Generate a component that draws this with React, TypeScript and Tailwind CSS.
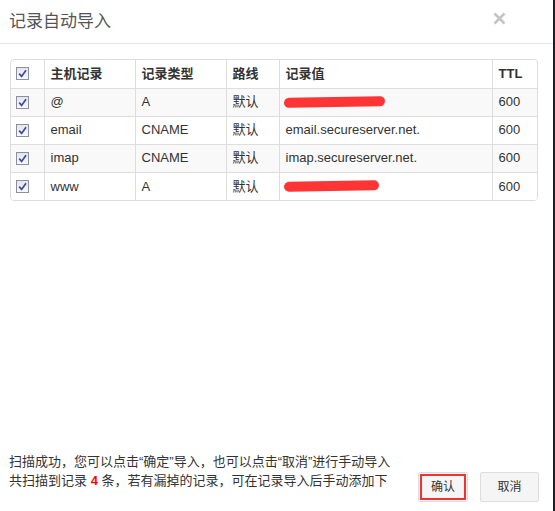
import React from 'react';

const rows = [
  { host: '@', type: 'A', line: '默认', value: null, ttl: '600', scribble: 'w-[101px]' },
  { host: 'email', type: 'CNAME', line: '默认', value: 'email.secureserver.net.', ttl: '600' },
  { host: 'imap', type: 'CNAME', line: '默认', value: 'imap.secureserver.net.', ttl: '600' },
  { host: 'www', type: 'A', line: '默认', value: null, ttl: '600', scribble: 'w-[95px]' },
];

function Check() {
  return (
    <span className="flex h-[13px] w-[13px] items-center justify-center border border-[#8c8f9f] bg-gradient-to-b from-[#e4e6ee] to-[#f7f8fb]">
      <svg width="9" height="9" viewBox="0 0 9 9">
        <path d="M1.2 4.6 L3.6 7.4 L8 1.2" fill="none" stroke="#3b4c9c" strokeWidth="1.7" />
      </svg>
    </span>
  );
}

function Scribble({ w }: { w: string }) {
  return <span className={`block h-[10px] ${w} rounded-full bg-[#ff3535] -rotate-1`} />;
}

export default function App() {
  return (
    <div
      className="relative flex h-[511px] w-[555px] flex-col bg-white text-[#333]"
      style={{ fontFamily: '"Liberation Sans", "Noto Sans CJK SC", sans-serif' }}
    >
      {/* header */}
      <div className="flex h-[44px] items-center justify-between border-b border-[#e5e5e5] pl-[9px] pr-[49px]">
        <h1 className="text-[17px] leading-none text-[#555]">记录自动导入</h1>
        <svg width="13" height="13" viewBox="0 0 13 13" className="-mt-[7px]">
          <path d="M1.5 1.5 L11.5 11.5 M11.5 1.5 L1.5 11.5" stroke="#c4c4c4" strokeWidth="2.6" />
        </svg>
      </div>

      {/* table */}
      <div className="flex-1 px-[10px] pt-[15px]">
        <div className="w-[528px] overflow-hidden rounded-[4px] border border-[#ddd]">
          <table className="w-full border-collapse text-[13px]">
            <colgroup>
              <col className="w-[33px]" />
              <col className="w-[91px]" />
              <col className="w-[91px]" />
              <col className="w-[53px]" />
              <col className="w-[213px]" />
              <col />
            </colgroup>
            <thead>
              <tr className="h-[28px] text-left font-bold">
                <th className="px-[5px]"><Check /></th>
                <th className="border-l border-[#ddd] px-[6px]">主机记录</th>
                <th className="border-l border-[#ddd] px-[6px]">记录类型</th>
                <th className="border-l border-[#ddd] px-[6px]">路线</th>
                <th className="border-l border-[#ddd] px-[6px]">记录值</th>
                <th className="border-l border-[#ddd] px-[6px]">TTL</th>
              </tr>
            </thead>
            <tbody>
              {rows.map((r, i) => (
                <tr key={r.host} className={`h-[28px] border-t border-[#ddd] ${i % 2 === 0 ? 'bg-[#f9f9f9]' : 'bg-white'}`}>
                  <td className="px-[5px]"><Check /></td>
                  <td className="border-l border-[#ddd] px-[6px]">{r.host}</td>
                  <td className="border-l border-[#ddd] px-[6px]">{r.type}</td>
                  <td className="border-l border-[#ddd] px-[6px]">{r.line}</td>
                  <td className="border-l border-[#ddd] px-[4px]">
                    {r.value ? <span className="px-[2px]">{r.value}</span> : <Scribble w={r.scribble!} />}
                  </td>
                  <td className="border-l border-[#ddd] px-[6px]">{r.ttl}</td>
                </tr>
              ))}
            </tbody>
          </table>
        </div>
      </div>

      {/* footer */}
      <div className="flex items-end justify-between pb-[9px] pl-[9px] pr-[16px]">
        <div className="pb-[12px] text-[13px] leading-[19px] text-[#333]">
          <p>扫描成功，您可以点击“确定”导入，也可以点击“取消”进行手动导入</p>
          <p>
            共扫描到记录 <span className="font-bold text-[#f00]">4</span> 条，若有漏掉的记录，可在记录导入后手动添加下
          </p>
        </div>
        <div className="flex shrink-0 gap-[12px]">
          <button className="h-[30px] w-[50px] rounded-[2px] border border-[#ddd] bg-[#f5f5f5] p-[1px] text-[12px] text-[#333]">
            <span className="flex h-full w-full items-center justify-center border-2 border-[#ee3333]">确认</span>
          </button>
          <button className="h-[30px] w-[59px] rounded-[2px] border border-[#ddd] bg-[#f5f5f5] text-[12px] text-[#333]">取消</button>
        </div>
      </div>

      <div className="absolute right-0 top-0 h-full w-[2px] bg-[#1b1b2b]" />
    </div>
  );
}
